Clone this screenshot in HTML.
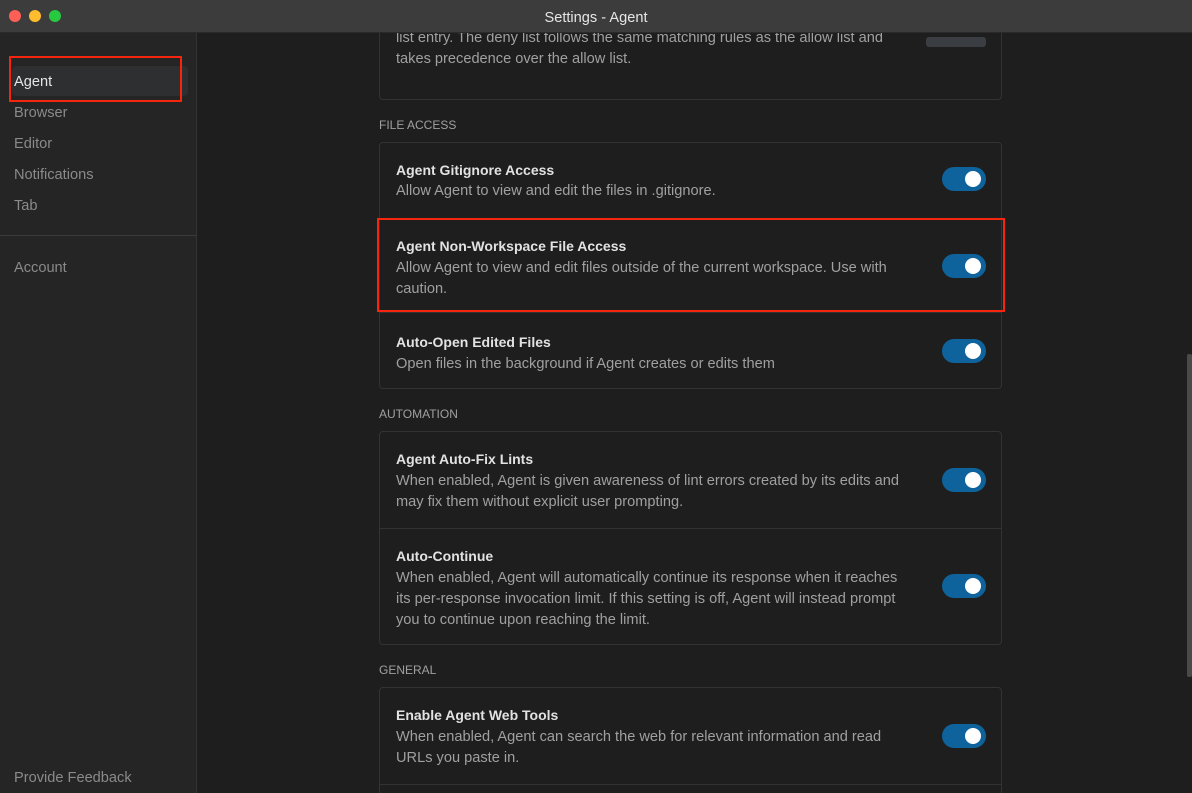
<!DOCTYPE html>
<html><head><style>
*{box-sizing:border-box;margin:0;padding:0}
body{width:1192px;height:793px;overflow:hidden;background:#1e1e1e;font-family:"Liberation Sans",sans-serif;position:relative}
.title{position:absolute;left:0;top:0;width:1192px;height:33px;background:#3c3c3c;border-bottom:1px solid #2a2a2a;color:#e6e6e6;font-size:14.6px;text-align:center;line-height:36px}
.dot{position:absolute;top:10px;width:12px;height:12px;border-radius:50%}
.side{position:absolute;left:0;top:33px;width:197px;height:760px;background:#252526;border-right:1px solid #333}
.si{position:absolute;left:14px;font-size:14.6px;color:#8a8a8a}
.main{position:absolute;left:198px;top:33px;width:994px;height:760px;overflow:hidden}
.card{position:absolute;left:181px;width:623px;border:1px solid #333;border-radius:4px}
.row{position:absolute;left:0;width:621px;border-top:1px solid #333}
.row:first-child{border-top:none}
.t{position:absolute;left:16px;font-size:14px;color:#e2e2e2;font-weight:bold}
.d{position:absolute;left:16px;font-size:14.6px;color:#a0a0a0;line-height:21px;width:512px}
.tg{position:absolute;left:562px;width:44px;height:24px;border-radius:12px;background:#0e639c}
.tg::after{content:"";position:absolute;right:5px;top:4px;width:16px;height:16px;border-radius:50%;background:#fff}
.lbl{position:absolute;left:181px;font-size:12px;color:#a0a0a0}
.red{position:absolute;border:2px solid #f5260e}
</style></head><body>
<div class="title">Settings - Agent
<div class="dot" style="left:9px;background:#fe5f57"></div>
<div class="dot" style="left:29px;background:#febc2e"></div>
<div class="dot" style="left:49px;background:#28c840"></div>
</div>
<div class="side">
<div style="position:absolute;left:12px;top:33px;width:176px;height:30px;background:#2d2f30;border-radius:4px"></div>
<div class="si" style="top:41px;color:#e6e6e6">Agent</div>
<div class="si" style="top:72px">Browser</div>
<div class="si" style="top:103px">Editor</div>
<div class="si" style="top:134px">Notifications</div>
<div class="si" style="top:165px">Tab</div>
<div style="position:absolute;left:0;top:202px;width:197px;height:1px;background:#3a3a3a"></div>
<div class="si" style="top:227px">Account</div>
<div class="si" style="top:737px">Provide Feedback</div>
</div>
<div class="main">
<div class="card" style="top:-60px;height:127px">
<div class="d" style="top:54px">list entry. The deny list follows the same matching rules as the allow list and takes precedence over the allow list.</div>
<div style="position:absolute;left:546px;top:63px;width:60px;height:10px;background:#3a3d41;border-radius:3px"></div>
</div>
<div class="lbl" style="top:85px">FILE ACCESS</div>
<div class="card" style="top:109px;height:247px">
<div class="row" style="top:0;height:76px"><div class="t" style="top:19px">Agent Gitignore Access</div><div class="d" style="top:38px">Allow Agent to view and edit the files in .gitignore.</div><div class="tg" style="top:24px"></div></div>
<div class="row" style="top:76px;height:93px"><div class="t" style="top:18px">Agent Non-Workspace File Access</div><div class="d" style="top:38px">Allow Agent to view and edit files outside of the current workspace. Use with caution.</div><div class="tg" style="top:34px"></div></div>
<div class="row" style="top:169px;height:77px"><div class="t" style="top:21px">Auto-Open Edited Files</div><div class="d" style="top:41px">Open files in the background if Agent creates or edits them</div><div class="tg" style="top:26px"></div></div>
</div>
<div class="lbl" style="top:374px">AUTOMATION</div>
<div class="card" style="top:398px;height:214px">
<div class="row" style="top:0;height:96px"><div class="t" style="top:19px">Agent Auto-Fix Lints</div><div class="d" style="top:39px">When enabled, Agent is given awareness of lint errors created by its edits and may fix them without explicit user prompting.</div><div class="tg" style="top:36px"></div></div>
<div class="row" style="top:96px;height:117px"><div class="t" style="top:19px">Auto-Continue</div><div class="d" style="top:39px">When enabled, Agent will automatically continue its response when it reaches its per-response invocation limit. If this setting is off, Agent will instead prompt you to continue upon reaching the limit.</div><div class="tg" style="top:45px"></div></div>
</div>
<div class="lbl" style="top:630px">GENERAL</div>
<div class="card" style="top:654px;height:140px">
<div class="row" style="top:0;height:96px"><div class="t" style="top:19px">Enable Agent Web Tools</div><div class="d" style="top:39px">When enabled, Agent can search the web for relevant information and read URLs you paste in.</div><div class="tg" style="top:36px"></div></div>
<div class="row" style="top:96px;height:40px"></div>
</div>
<div style="position:absolute;left:989px;top:321px;width:5px;height:323px;background:#4a4a4a;border-radius:2px"></div>
</div>
<div class="red" style="left:9px;top:56px;width:173px;height:46px"></div>
<div class="red" style="left:377px;top:218px;width:628px;height:94px"></div>
</body></html>
